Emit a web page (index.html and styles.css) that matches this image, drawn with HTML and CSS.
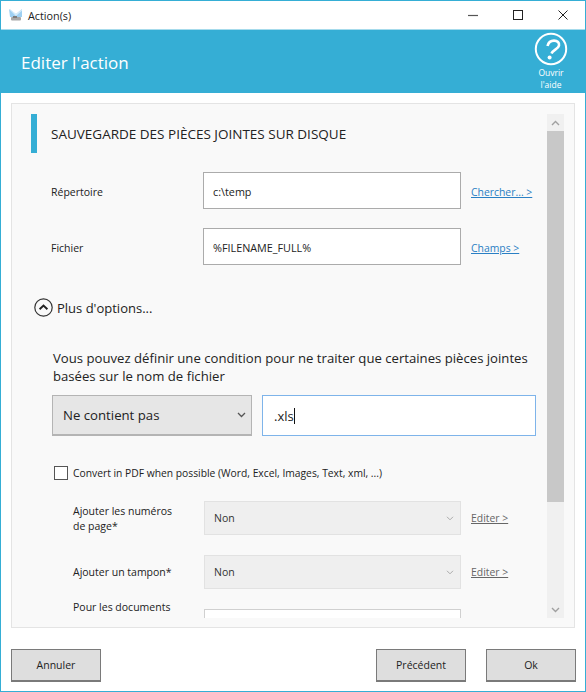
FILE: index.html
```html
<!DOCTYPE html>
<html lang="fr">
<head>
  <meta charset="UTF-8">
  <title>Action(s)</title>
  <link rel="stylesheet" href="styles.css">
</head>
<body>
  <div id="window">
    <div class="titlebar">
      <svg class="app-icon" width="16" height="14" viewBox="0 0 16 14">
        <path d="M1 1l7 5 6-5v8H2z" fill="#9fd0f2"/>
        <path d="M1 1h1l6 5 6-5v1.500L8 8z" fill="#d6ecfa"/>
        <rect x="3" y="9" width="10" height="3.500" rx="1" fill="#a8a8a8"/>
        <rect x="5" y="8" width="4" height="2" fill="#7d7d7d"/>
      </svg>
      <span class="title-text">Action(s)</span>
      <div class="win-btns">
        <svg width="12" height="12" viewBox="0 0 12 12"><path d="M1 6.500h10" stroke="#555" stroke-width="1.200"/></svg>
        <svg width="12" height="12" viewBox="0 0 12 12"><rect x="1.500" y="1.500" width="9" height="9" fill="none" stroke="#222"/></svg>
        <svg width="12" height="12" viewBox="0 0 12 12"><path d="M1.500 1.500l9 9M10.500 1.500l-9 9" stroke="#222" stroke-width="1"/></svg>
      </div>
    </div>

    <div class="header">
      <h1>Editer l'action</h1>
      <div class="help">
        <svg width="34" height="34" viewBox="0 0 34 34">
          <circle cx="17" cy="17" r="15.200" fill="none" stroke="#fff" stroke-width="2"/>
          <path d="M13.500 14C14.500 10.200 17.500 8.600 20 8.600c3.500 0 5.500 2 5 4.900-.6 3.500-6 4.500-7.500 8" fill="none" stroke="#fff" stroke-width="2.600"/>
          <circle cx="15.600" cy="25.400" r="2" fill="#fff"/>
        </svg>
        <span>Ouvrir<br>l'aide</span>
      </div>
    </div>

    <div class="panel">
      <div class="content">
        <div class="section-title">
          <span class="accent"></span>
          <h2>SAUVEGARDE DES PIÈCES JOINTES SUR DISQUE</h2>
        </div>

        <div class="field">
          <label>Répertoire</label>
          <div class="textbox">c:\temp</div>
          <a class="link blue">Chercher... &gt;</a>
        </div>
        <div class="field">
          <label>Fichier</label>
          <div class="textbox">%FILENAME_FULL%</div>
          <a class="link blue">Champs &gt;</a>
        </div>

        <div class="more">
          <svg width="19" height="19" viewBox="0 0 19 19">
            <circle cx="9.500" cy="9.500" r="8.700" fill="none" stroke="#333" stroke-width="1.200"/>
            <path d="M5.600 11.200l3.900-3.700 3.900 3.700" fill="none" stroke="#222" stroke-width="1.900"/>
          </svg>
          <span>Plus d'options...</span>
        </div>

        <p class="intro">Vous pouvez définir une condition pour ne traiter que certaines pièces jointes basées sur le nom de fichier</p>

        <div class="condition">
          <div class="combo">
            <span>Ne contient pas</span>
            <svg width="9" height="6" viewBox="0 0 9 6"><path d="M1 1l3.500 3.500L8 1" fill="none" stroke="#555" stroke-width="1.300"/></svg>
          </div>
          <div class="focused">.xls<span class="caret"></span></div>
        </div>

        <div class="check-row">
          <span class="checkbox"></span>
          <span>Convert in PDF when possible (Word, Excel, Images, Text, xml, ...)</span>
        </div>

        <div class="option first">
          <label>Ajouter les numéros de page*</label>
          <div class="disabled-combo">
            <span>Non</span>
            <svg width="8" height="5" viewBox="0 0 8 5"><path d="M1 .8l3 3 3-3" fill="none" stroke="#aaa" stroke-width="1"/></svg>
          </div>
          <a class="link grey">Editer &gt;</a>
        </div>
        <div class="option">
          <label>Ajouter un tampon*</label>
          <div class="disabled-combo">
            <span>Non</span>
            <svg width="8" height="5" viewBox="0 0 8 5"><path d="M1 .8l3 3 3-3" fill="none" stroke="#aaa" stroke-width="1"/></svg>
          </div>
          <a class="link grey">Editer &gt;</a>
        </div>
        <div class="option last">
          <label>Pour les documents</label>
          <div class="blank-box"></div>
        </div>
      </div>

      <div class="scrollbar">
        <div class="arrow">
          <svg width="9" height="6" viewBox="0 0 9 6"><path d="M1 5l3.500-3.500L8 5" fill="none" stroke="#a0a0a0" stroke-width="1.400"/></svg>
        </div>
        <div class="thumb"></div>
        <div class="track"></div>
        <div class="arrow">
          <svg width="9" height="6" viewBox="0 0 9 6"><path d="M1 1l3.500 3.500L8 1" fill="none" stroke="#a0a0a0" stroke-width="1.400"/></svg>
        </div>
      </div>
    </div>

    <div class="footer">
      <button>Annuler</button>
      <div class="footer-right">
        <button>Précédent</button>
        <button>Ok</button>
      </div>
    </div>
  </div>
</body>
</html>
```

FILE: styles.css
```css
:root {
  --teal: #35aed5;
  --border: #e4e4e4;
  --text: #222222;
}
* {
  box-sizing: border-box;
  margin: 0;
  padding: 0;
}
body {
  font-family: 'Open Sans', 'Noto Sans', sans-serif;
  color: var(--text);
  background: #fff;
}
#window {
  width: 586px;
  height: 692px;
  border: 1px solid var(--teal);
  display: flex;
  flex-direction: column;
  background: #fff;
}
.titlebar {
  height: 28px;
  display: flex;
  align-items: center;
  padding-left: 7px;
  font-size: 10.8px;
}
.app-icon {
  margin-right: 4px;
}
.win-btns {
  margin-left: auto;
  display: flex;
  gap: 33px;
  padding-right: 16px;
}
.header {
  height: 64px;
  background: var(--teal);
  display: flex;
  justify-content: space-between;
  color: #fff;
  padding: 2px 17px 0 20px;
  border-top: 1px solid #a6dbec;
}
h1 {
  font-size: 17px;
  font-weight: 400;
  line-height: 61px;
}
.help {
  width: 34px;
  display: flex;
  flex-direction: column;
  align-items: center;
  font-size: 8.5px;
  line-height: 12px;
  text-align: center;
}
.help span {
  margin-top: 1px;
  white-space: nowrap;
}
.panel {
  margin: 10px 10px 0;
  height: 525px;
  background: #f9f9f9;
  border: 1px solid var(--border);
  display: flex;
  padding: 10px 10px 9px 0;
}
.content {
  flex: 1;
  overflow: hidden;
  min-width: 0;
}
.section-title {
  display: flex;
  align-items: center;
  height: 39px;
  margin: 0 0 0 19px;
  gap: 14px;
}
.accent {
  width: 6px;
  height: 39px;
  background: var(--teal);
}
h2 {
  font-size: 13.5px;
  font-weight: 400;
}
.field {
  display: flex;
  align-items: center;
  margin: 19px 0 0 39px;
  height: 37px;
}
.field label {
  width: 152px;
  padding-top: 2px;
  font-size: 10.5px;
}
.textbox {
  width: 258px;
  height: 37px;
  background: #fff;
  border: 1px solid #ababab;
  font-size: 10.8px;
  line-height: 37px;
  padding-left: 9px;
}
.link {
  margin-left: 10px;
  font-size: 10.4px;
  text-decoration: underline;
}
.field .link {
  padding-top: 2px;
}
.blue {
  color: #2a7fc4;
}
.grey {
  color: #666;
}
.more {
  display: flex;
  align-items: center;
  gap: 4px;
  margin: 33px 0 0 22px;
  font-size: 13px;
  height: 19px;
}
.intro {
  margin: 32px 0 0 41px;
  width: 490px;
  font-size: 13.15px;
  line-height: 18px;
}
.condition {
  display: flex;
  gap: 10px;
  margin: 10px 0 0 40px;
}
.combo {
  width: 200px;
  height: 41px;
  background: #e6e6e6;
  border: 1px solid #b4b4b4;
  border-bottom-width: 2px;
  display: flex;
  align-items: center;
  justify-content: space-between;
  padding: 0 5px 0 10px;
  font-size: 13.2px;
}
.focused {
  width: 274px;
  height: 41px;
  background: #fff;
  border: 1px solid #7eb4ea;
  display: flex;
  align-items: center;
  padding-left: 11px;
  font-size: 13px;
}
.caret {
  width: 1px;
  height: 16px;
  background: #111;
}
.check-row {
  display: flex;
  align-items: center;
  gap: 5px;
  margin: 29px 0 0 42px;
  font-size: 10.3px;
  height: 15px;
}
.checkbox {
  width: 14px;
  height: 14px;
  background: #fff;
  border: 1px solid #555;
}
.option {
  display: flex;
  align-items: center;
  margin: 20px 0 0 61px;
  height: 34px;
}
.option.first {
  margin-top: 21px;
}
.option label {
  width: 131px;
  padding-right: 20px;
  font-size: 10.5px;
  line-height: 15px;
}
.option.first label {
  padding-top: 2px;
}
.disabled-combo {
  width: 257px;
  height: 34px;
  background: #efefef;
  border: 1px solid #e2e2e2;
  display: flex;
  align-items: center;
  justify-content: space-between;
  padding: 0 6px 0 9px;
  font-size: 10.5px;
  color: #333;
}
.option.last {
  align-items: flex-start;
  margin-top: 14px;
}
.option.last label {
  margin-top: -3px;
}
.blank-box {
  width: 257px;
  height: 34px;
  margin-top: 6px;
  background: #fff;
  border: 1px solid #d0d0d0;
}
.scrollbar {
  width: 17px;
  display: flex;
  flex-direction: column;
  background: #f0f0f0;
}
.arrow {
  height: 17px;
  display: flex;
  align-items: center;
  justify-content: center;
  flex-shrink: 0;
}
.thumb {
  height: 371px;
  background: #c8c8c8;
}
.track {
  flex: 1;
}
.footer {
  display: flex;
  justify-content: space-between;
  padding: 21px 9px 0 10px;
}
.footer-right {
  display: flex;
  gap: 20px;
}
button {
  width: 90px;
  height: 33px;
  background: #dedede;
  border: 1px solid #7a7a7a;
  border-bottom-width: 2px;
  font-family: inherit;
  font-size: 10.5px;
  color: var(--text);
}
```
